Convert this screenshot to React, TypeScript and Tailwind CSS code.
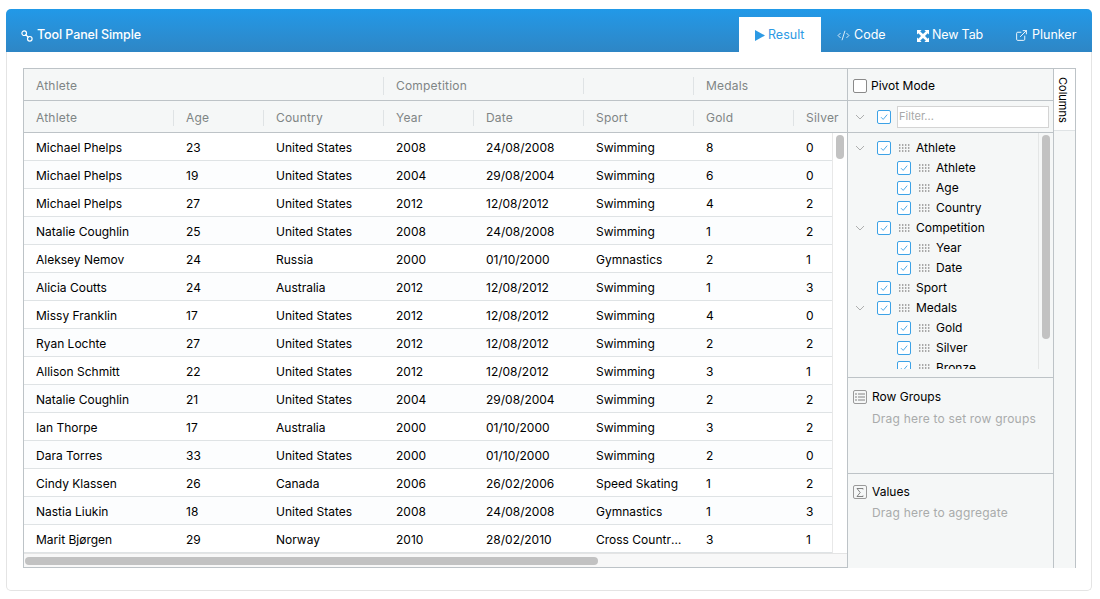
import React from "react";
import { CodeXml, ExternalLink } from "lucide-react";

const rows: string[][] = [
  ["Michael Phelps","23","United States","2008","24/08/2008","Swimming","8","0"],
  ["Michael Phelps","19","United States","2004","29/08/2004","Swimming","6","0"],
  ["Michael Phelps","27","United States","2012","12/08/2012","Swimming","4","2"],
  ["Natalie Coughlin","25","United States","2008","24/08/2008","Swimming","1","2"],
  ["Aleksey Nemov","24","Russia","2000","01/10/2000","Gymnastics","2","1"],
  ["Alicia Coutts","24","Australia","2012","12/08/2012","Swimming","1","3"],
  ["Missy Franklin","17","United States","2012","12/08/2012","Swimming","4","0"],
  ["Ryan Lochte","27","United States","2012","12/08/2012","Swimming","2","2"],
  ["Allison Schmitt","22","United States","2012","12/08/2012","Swimming","3","1"],
  ["Natalie Coughlin","21","United States","2004","29/08/2004","Swimming","2","2"],
  ["Ian Thorpe","17","Australia","2000","01/10/2000","Swimming","3","2"],
  ["Dara Torres","33","United States","2000","01/10/2000","Swimming","2","0"],
  ["Cindy Klassen","26","Canada","2006","26/02/2006","Speed Skating","1","2"],
  ["Nastia Liukin","18","United States","2008","24/08/2008","Gymnastics","1","3"],
  ["Marit Bjørgen","29","Norway","2010","28/02/2010","Cross Country Skiing","3","1"],
];
const widths = [150, 90, 120, 90, 110, 110, 100, 100];
const headerWidths = [149, 90, 120, 90, 110, 110, 100, 54];
const headers = ["Athlete","Age","Country","Year","Date","Sport","Gold","Silver"];

function Check() {
  return (
    <span className="w-[14px] h-[14px] shrink-0 rounded-[2px] border border-[#3da2e6] bg-white flex items-center justify-center">
      <svg width="10" height="10" viewBox="0 0 10 10" fill="none" stroke="#3da2e6" strokeWidth="0.9"><path d="M2 5.2 4.2 7.4 8.2 2.6" /></svg>
    </span>
  );
}
function Chevron() {
  return (
    <svg width="10" height="6" viewBox="0 0 10 6" fill="none" stroke="#9a9a9a" strokeWidth="0.8" className="shrink-0"><path d="M1 1 5 5 9 1" /></svg>
  );
}
function Grip() {
  return (
    <svg width="12" height="9" viewBox="0 0 12 9" fill="#a8a8a8" className="shrink-0">
      {[0, 3, 6, 9].map((x) => [0, 3, 6].map((y) => <rect key={x + "-" + y} x={x} y={y} width="1.4" height="2" />))}
    </svg>
  );
}
function Group({ label, open = true }: { label: string; open?: boolean }) {
  return (
    <div className="h-5 flex items-center pl-[7px]">
      <span className="w-[22px] shrink-0">{open && <Chevron />}</span>
      <Check />
      <span className="ml-2"><Grip /></span>
      <span className="ml-[5px]">{label}</span>
    </div>
  );
}
function Item({ label }: { label: string }) {
  return (
    <div className="h-5 flex items-center pl-[49px]">
      <Check />
      <span className="ml-2"><Grip /></span>
      <span className="ml-[5px]">{label}</span>
    </div>
  );
}
function Tab({ icon, label, active, cls }: { icon: React.ReactNode; label: string; active?: boolean; cls: string }) {
  return (
    <div className={active ? "h-[35px] pt-[2px] pl-4 bg-white text-[#2d9ae4] flex items-center " + cls : "h-[35px] pt-[2px] pl-4 text-white flex items-center " + cls}>
      {icon}
      <span>{label}</span>
    </div>
  );
}

export default function App() {
  return (
    <div className="w-[1100px] h-[599px] bg-white pt-[9px] px-[6px] overflow-hidden font-['Inter','Liberation_Sans',sans-serif]">
      <div className="w-[1086px] h-[582px] rounded-[5px] border border-[#e4e4e4] border-t-0 relative">
        <div className="-mx-px h-[43px] rounded-t-[5px] bg-gradient-to-b from-[#2199e8] to-[#2e86c5] flex items-end justify-between text-[12.5px]">
          <div className="h-[35px] pt-[2px] flex items-center pl-[15px] gap-1 text-white font-medium tracking-[-0.1px]">
            <svg width="12" height="12" viewBox="0 0 12 12" fill="none" stroke="white" strokeWidth="1.2">
              <ellipse cx="3.2" cy="3.2" rx="2.3" ry="2.3" />
              <ellipse cx="8.8" cy="8.8" rx="2.3" ry="2.3" />
              <path d="M4.5 4.5 7.5 7.5" />
            </svg>
            <span>Tool Panel Simple</span>
          </div>
          <div className="flex">
            <Tab active cls="w-[82px] gap-[3px]" label="Result" icon={<svg width="10" height="11" viewBox="0 0 10 11" fill="#2d9ae4"><path d="M0 0 10 5.5 0 11Z" /></svg>} />
            <Tab cls="w-[80px] gap-1" label="Code" icon={<CodeXml size={13} strokeWidth={1.5} />} />
            <Tab cls="w-[98px] gap-[3px] tracking-[-0.15px]" label="New Tab" icon={
              <svg width="12" height="12" viewBox="0 0 12 12" fill="white">
                <path d="M0 0H4.6L3.2 1.4 6 4 8.8 1.4 7.4 0H12V4.6L10.6 3.2 8 6 10.6 8.8 12 7.4V12H7.4L8.8 10.6 6 8 3.2 10.6 4.6 12H0V7.4L1.4 8.8 4 6 1.4 3.2 0 4.6Z" />
              </svg>
            } />
            <Tab cls="w-[93px] gap-1" label="Plunker" icon={<ExternalLink size={13} strokeWidth={1.7} />} />
          </div>
        </div>

        <div className="ml-[16px] mt-[16px] w-[1053px] h-[500px] flex border border-b-0 border-[#bdc3c7] text-[12px] text-black">
          {/* Grid */}
          <div className="w-[823px] shrink-0 flex flex-col border-b border-[#bdc3c7] overflow-hidden">
            <div className="h-[32px] pt-[2px] shrink-0 flex items-center bg-[#f5f7f7] border-b border-[#bdc3c7] text-[#7f8585] tracking-[0.2px]">
              <div className="w-[359px] pl-3">Athlete</div>
              <div className="w-[200px] pl-3 border-l border-[#dfe3e5]">Competition</div>
              <div className="w-[110px] h-4 border-l border-[#dfe3e5]" />
              <div className="flex-1 pl-3 border-l border-[#dfe3e5]">Medals</div>
            </div>
            <div className="h-[32px] pt-[2px] shrink-0 flex items-center bg-[#f5f7f7] border-b border-[#bdc3c7] text-[#7f8585] tracking-[0.2px]">
              {headers.map((h, i) => (
                <div key={h} style={{ width: headerWidths[i] }} className={i ? "shrink-0 pl-3 h-4 flex items-center border-l border-[#dfe3e5]" : "shrink-0 pl-3 h-4 flex items-center"}>{h}</div>
              ))}
            </div>
            <div className="flex-1 flex min-h-0">
              <div className="w-[808px] shrink-0 overflow-hidden">
                {rows.map((r, ri) => (
                  <div key={ri} className={ri % 2 ? "h-[28px] pt-[2px] flex items-center border-b border-[#dfe3e5] bg-[#fcfdfe]" : "h-[28px] pt-[2px] flex items-center border-b border-[#dfe3e5] bg-white"}>
                    {r.map((c, i) => (
                      <div key={i} style={{ width: widths[i] }} className="shrink-0 px-3 truncate">{c}</div>
                    ))}
                  </div>
                ))}
              </div>
              <div className="flex-1 bg-white border-l border-[#e8e8e8] pt-[2px] flex justify-center">
                <div className="w-[8px] h-[24px] rounded bg-[#c2c2c2]" />
              </div>
            </div>
            <div className="h-[14px] shrink-0 bg-[#f8f8f8] border-t border-[#e4e4e4] flex items-center pl-px">
              <div className="w-[573px] h-[8px] rounded bg-[#c2c2c2]" />
            </div>
          </div>

          {/* Tool panel */}
          <div className="w-[206px] shrink-0 flex flex-col bg-[#f5f7f7] border-l border-[#bdc3c7]">
            <div className="h-[32px] pt-[2px] shrink-0 flex items-center gap-1 pl-[5px] border-b border-[#bdc3c7]">
              <span className="w-[14px] h-[14px] rounded-[2px] border border-[#8a8a8a] bg-white" />
              <span>Pivot Mode</span>
            </div>
            <div className="h-[32px] shrink-0 flex items-center pl-[7px] border-b border-[#bdc3c7]">
              <span className="w-[22px]"><Chevron /></span>
              <Check />
              <div className="ml-[6px] w-[152px] h-[22px] bg-white border border-[#d4d4d4] pl-px flex items-center text-[#a8a8a8] text-[11px]">Filter...</div>
            </div>
            <div className="h-[245px] shrink-0 pb-2 border-b border-[#bdc3c7]">
              <div className="h-full flex">
                <div className="flex-1 overflow-hidden pt-[5px]">
                  <Group label="Athlete" />
                  <Item label="Athlete" />
                  <Item label="Age" />
                  <Item label="Country" />
                  <Group label="Competition" />
                  <Item label="Year" />
                  <Item label="Date" />
                  <Group label="Sport" open={false} />
                  <Group label="Medals" />
                  <Item label="Gold" />
                  <Item label="Silver" />
                  <Item label="Bronze" />
                </div>
                <div className="w-[15px] shrink-0 border-l border-[#e4e6e6] pt-[2px] pl-[3px]">
                  <div className="w-[8px] h-[204px] rounded bg-[#c2c2c2]" />
                </div>
              </div>
            </div>
            <div className="h-[96px] shrink-0 border-b border-[#bdc3c7] pt-[10px] pl-[5px]">
              <div className="flex items-center gap-[5px]">
                <span className="w-[14px] h-[14px] rounded-[2px] border border-[#9a9a9a] flex items-center justify-center">
                  <svg width="10" height="8" viewBox="0 0 10 8" stroke="#666" strokeWidth="0.8"><path d="M0 1H2M3 1H10M3 4H10M3 7H10M0 4H2M0 7H2" /></svg>
                </span>
                <span>Row Groups</span>
              </div>
              <div className="mt-[4px] pl-[19px] text-[#a9abab] tracking-[0.2px]">Drag here to set row groups</div>
            </div>
            <div className="flex-1 pt-[9px] pl-[5px]">
              <div className="flex items-center gap-[5px]">
                <span className="w-[14px] h-[14px] rounded-[2px] border border-[#9a9a9a] flex items-center justify-center">
                  <svg width="8" height="9" viewBox="0 0 8 9" fill="none" stroke="#666" strokeWidth="0.8"><path d="M7 1.5V.5H1L4.2 4.5 1 8.5H7V7.5" /></svg>
                </span>
                <span>Values</span>
              </div>
              <div className="mt-[3px] pl-[19px] text-[#a9abab] tracking-[0.2px]">Drag here to aggregate</div>
            </div>
          </div>

          {/* Side tabs */}
          <div className="flex-1 bg-[#f5f7f7] border-l border-[#bdc3c7]">
            <div className="h-[62px] bg-white border-b border-[#dfe3e5] pt-2 pr-[3px] flex justify-center">
              <span className="[writing-mode:vertical-rl] text-[11px]">Columns</span>
            </div>
          </div>
        </div>
      </div>
    </div>
  );
}
